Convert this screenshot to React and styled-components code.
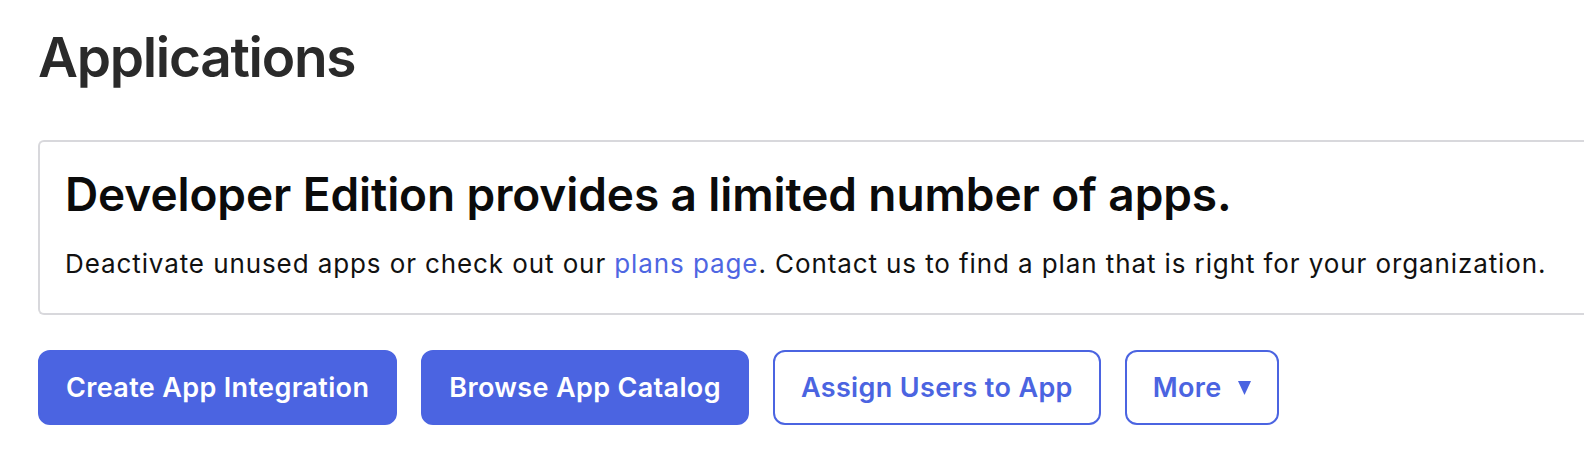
import React from "react";
import styled, { createGlobalStyle } from "styled-components";

const Global = createGlobalStyle`
  html, body { margin: 0; padding: 0; background: #ffffff; }
  body { font-family: Inter, "Noto Sans", sans-serif; overflow: hidden; }
`;

const Page = styled.main`
  padding: 24px 0 0 38px;
  display: flex;
  flex-direction: column;
`;

const Title = styled.h1`
  margin: 0;
  font-size: 55px;
  line-height: 66px;
  font-weight: 600;
  color: #2a2a2a;
  letter-spacing: -1.3px;
`;

const Notice = styled.section`
  margin-top: 50px;
  border: 2px solid #d8d8dc;
  border-right: none;
  border-radius: 6px 0 0 6px;
  padding: 25px 0 33px 25px;
`;

const NoticeHeading = styled.h2`
  margin: 0;
  font-size: 46px;
  line-height: 54px;
  font-weight: 600;
  color: #0b0b0b;
  letter-spacing: -0.1px;
`;

const NoticeText = styled.p`
  margin: 27px 0 0;
  font-size: 26px;
  line-height: 32px;
  font-weight: 400;
  color: #111111;
  letter-spacing: 0.9px;
`;

const Link = styled.a`
  color: #4e66e2;
  text-decoration: none;
`;

const Actions = styled.div`
  margin-top: 35px;
  display: flex;
  gap: 24px;
`;

const Button = styled.button`
  height: 75px;
  box-sizing: border-box;
  padding: 0 26px;
  border-radius: 12px;
  border: 2px solid #4b64e1;
  background: ${(p) => (p.$primary ? "#4b64e1" : "#ffffff")};
  color: ${(p) => (p.$primary ? "#ffffff" : "#4b64e1")};
  font-family: Inter, "Noto Sans", sans-serif;
  font-size: 27px;
  font-weight: 600;
  letter-spacing: 0.35px;
  display: flex;
  align-items: center;
  gap: 16px;
  cursor: pointer;
`;

const Caret = styled.svg`
  width: 13px;
  height: 14px;
  display: block;
`;

export default function App() {
  return (
    <>
      <Global />
      <Page>
        <Title>Applications</Title>
        <Notice>
          <NoticeHeading>Developer Edition provides a limited number of apps.</NoticeHeading>
          <NoticeText>
            Deactivate unused apps or check out our <Link href="#">plans page</Link>. Contact us to find a plan that is right for your organization.
          </NoticeText>
        </Notice>
        <Actions>
          <Button $primary>Create App Integration</Button>
          <Button $primary>Browse App Catalog</Button>
          <Button>Assign Users to App</Button>
          <Button>
            More
            <Caret viewBox="0 0 13 14">
              <path d="M0 0 H13 L6.5 14 Z" fill="currentColor" />
            </Caret>
          </Button>
        </Actions>
      </Page>
    </>
  );
}
